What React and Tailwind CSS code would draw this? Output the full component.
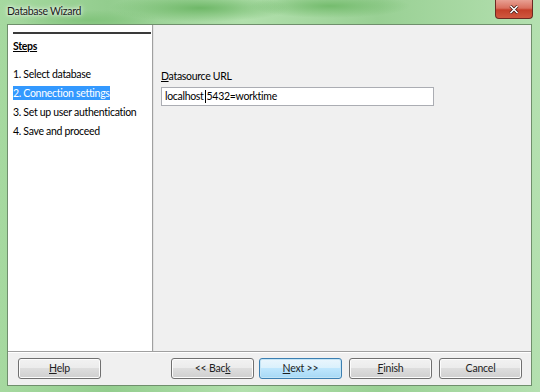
import React from 'react';

const font = { fontFamily: 'Lato, "Noto Sans", sans-serif' };

function WinButton({ children, primary, className = '' }) {
  return (
    <button
      className={
        'h-[21px] w-[83px] rounded-[3px] border text-[10.5px] tracking-[-0.2px] text-[#1e1e1e] leading-none flex items-center justify-center ' +
        (primary
          ? 'border-[#3c7fb1] bg-[linear-gradient(#eaf6fd_0%,#d9f0fc_50%,#bee6fd_50%,#a7d9f5_100%)] shadow-[inset_0_0_0_1px_#c4e5f6] '
          : 'border-[#707070] bg-[linear-gradient(#f2f2f2_0%,#ebebeb_50%,#dddddd_50%,#cfcfcf_100%)] shadow-[inset_0_0_0_1px_#fcfcfc] ') +
        className
      }
    >
      {children}
    </button>
  );
}

export default function App() {
  return (
    <div
      className="w-[540px] h-[392px] flex flex-col overflow-hidden bg-[radial-gradient(ellipse_90px_14px_at_200px_8px,#6fb868,transparent),radial-gradient(ellipse_80px_12px_at_330px_6px,#75bc6e,transparent),radial-gradient(ellipse_70px_10px_at_90px_20px,#82c47c,transparent),linear-gradient(90deg,#a6d9a0_0%,#93cd8e_20%,#b2e0ad_45%,#99d094_70%,#b4e0b0_100%)]"
      style={font}
    >
      {/* title bar */}
      <div className="h-[24px] flex items-start justify-between pl-[7px] pr-[7px] shrink-0">
        <span className="mt-[6px] text-[10.5px] tracking-[-0.3px] leading-none text-[#1a1a1a] [text-shadow:0_0_6px_#ffffff,0_0_3px_#ffffff]">
          Database Wizard
        </span>
        <div className="w-[38px] h-[19px] rounded-b-[4px] border border-t-0 border-[#6b2a22] bg-[linear-gradient(#e8a093_0%,#d9705e_45%,#c4402a_55%,#d0583f_100%)] flex items-center justify-center">
          <svg width="10" height="9" viewBox="0 0 10 9">
            <path d="M1.5 1 L8.5 8 M8.5 1 L1.5 8" stroke="#3b1410" strokeWidth="3" />
            <path d="M1.5 1 L8.5 8 M8.5 1 L1.5 8" stroke="#ffffff" strokeWidth="1.6" />
          </svg>
        </div>
      </div>

      {/* client area */}
      <div className="flex-1 ml-[7px] mr-[8px] mb-[6px] flex flex-col border border-[#6f8f6c] bg-[#f0f0f0]">
        <div className="flex flex-1 min-h-0">
          {/* steps pane */}
          <div className="w-[144px] bg-white pl-[5px] pt-[7px] shrink-0 whitespace-nowrap tracking-[-0.3px]">
            <div className="border-t-2 border-[#3a3a3a] w-[138px]" />
            <div className="mt-[5px] text-[10.5px] font-bold underline leading-[14px] text-black">Steps</div>
            <ul className="mt-[12px] text-[10.5px] leading-[19px] text-black">
              <li>1. Select database</li>
              <li>
                <span className="bg-[#3399ff] text-white py-[1px]">2. Connection settings</span>
              </li>
              <li>3. Set up user authentication</li>
              <li>4. Save and proceed</li>
            </ul>
          </div>
          <div className="w-[2px] bg-[#a0a0a0] border-r border-[#e3e3e3] shrink-0" />
          {/* settings pane */}
          <div className="flex-1 pl-[7px] pt-[44px] tracking-[-0.3px]">
            <div className="text-[10.5px] leading-[14px] text-black">
              <span className="underline">D</span>atasource URL
            </div>
            <div className="mt-[4px] w-[273px] h-[19px] bg-white border border-[#abadb3] flex items-center pl-[3px] text-[10.5px] text-black leading-none">
              localhost<span className="inline-block w-[1px] h-[13px] bg-black mx-[1px]" />5432=worktime
            </div>
          </div>
        </div>
        {/* button bar */}
        <div className="h-[34px] border-t border-[#a0a0a0] shadow-[inset_0_1px_0_#ffffff] flex items-start pt-[6px] pl-[10px] pr-[9px] shrink-0">
          <WinButton>
            <span><span className="underline">H</span>elp</span>
          </WinButton>
          <div className="flex-1" />
          <WinButton>
            <span>&lt;&lt; Bac<span className="underline">k</span></span>
          </WinButton>
          <WinButton primary className="ml-[5px]">
            <span><span className="underline">N</span>ext &gt;&gt;</span>
          </WinButton>
          <WinButton className="ml-[7px]">
            <span><span className="underline">F</span>inish</span>
          </WinButton>
          <WinButton className="ml-[7px]">Cancel</WinButton>
        </div>
      </div>
    </div>
  );
}
